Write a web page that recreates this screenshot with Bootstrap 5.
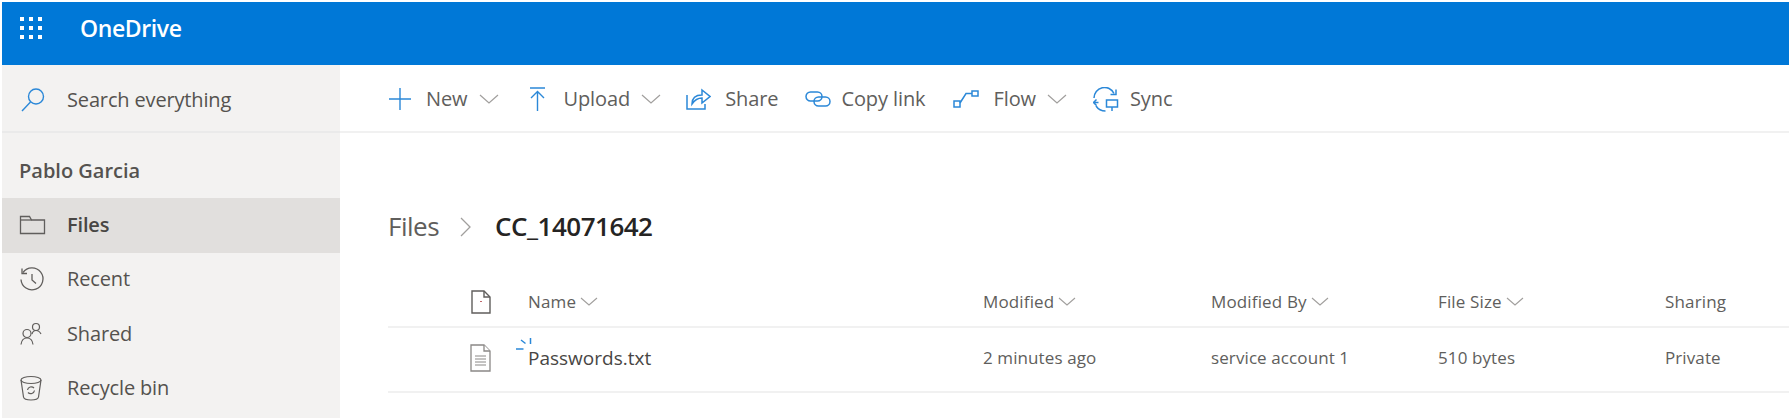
<!DOCTYPE html>
<html lang="en">
<head>
  <meta charset="UTF-8" />
  <meta name="viewport" content="width=device-width, initial-scale=1.0" />
  <title>OneDrive</title>
  <link href="https://cdn.jsdelivr.net/npm/bootstrap@5.3.2/dist/css/bootstrap.min.css" rel="stylesheet" />
  <style>
    html, body { height: 100%; }
    body {
      background: #fff;
      padding: 2px 0 0 2px;
      overflow: hidden;
      font-family: "Open Sans", "Liberation Sans", sans-serif;
      color: #323130;
      font-size: 20px;
    }
    svg { display: block; flex: none; }
    .top-strip { height: 63px; background: #0078d7; color: #fff; }
    .waffle { margin-left: 17px; margin-bottom: 11px; }
    .brand-name { margin-left: 35px; margin-bottom: 11px; font-size: 23px; font-weight: 600; letter-spacing: -0.4px; }
    .app-body { height: 353px; }
    .side-panel { width: 338px; background: #f3f2f1; flex: none; }
    .search-row { height: 68px; padding: 3px 0 0 17px; border-bottom: 2px solid #eaeaea; }
    .side-label { letter-spacing: -0.15px; color: #55524f; margin-left: 20px; }
    .user-name { height: 65px; padding: 23px 0 0 17px; font-size: 20px; font-weight: 600; color: #55524f; }
    .side-item { height: 54.5px; padding: 0 0 1px 17px; }
    .side-item.current { background: #e1dfdd; }
    .side-item.current .side-label { font-weight: 600; color: #484644; }
    .tool-bar { height: 68px; padding: 2px 0 0 48px; border-bottom: 2px solid #f1f1f1; }
    .tool-item { color: #605e5c; letter-spacing: -0.1px; }
    .tool-gap-a { margin-left: 30px; }
    .tool-gap-b { margin-left: 25px; }
    .tool-gap-c { margin-left: 27px; }
    .tool-gap-d { margin-left: 28px; }
    .tool-gap-e { margin-left: 25px; }
    .tool-text { margin-left: 14px; }
    .tool-text-wide { margin-left: 17px; }
    .tool-text-near { margin-left: 10px; }
    .tool-caret { margin-left: 11px; }
    .crumb-row { height: 132px; padding: 74px 0 0 48px; font-size: 26px; letter-spacing: -0.5px; }
    .crumb-root { color: #605e5c; }
    .crumb-sep { margin: 10px 23px 0 21px; }
    .crumb-now { font-weight: 600; color: #252423; }
    .list-area { margin-left: 48px; }
    .file-row { display: grid; grid-template-columns: 140px 455px 228px 227px 227px 1fr; align-items: center; border-bottom: 2px solid #f1f1f1; font-size: 17px; color: #605e5c; letter-spacing: 0.1px; }
    .head-row { height: 63px; padding-top: 12px; letter-spacing: 0.15px; }
    .data-row { height: 65px; padding-bottom: 3px; }
    .name-cell { font-size: 19px; letter-spacing: 0; color: #484644; position: relative; }
    .file-icon { margin-left: 82px; }
    .head-icon { margin-left: 83px; }
    .spin-mark { position: absolute; left: -12px; top: -7px; }
  </style>
</head>
<body>
  <div class="top-strip d-flex align-items-center">
    <svg class="waffle" width="26" height="24" viewBox="0 0 26 24" fill="#fff">
      <rect x="1" y="1" width="4" height="4"/><rect x="10" y="1" width="4" height="4"/><rect x="19" y="1" width="4" height="4"/>
      <rect x="1" y="10" width="4" height="4"/><rect x="10" y="10" width="4" height="4"/><rect x="19" y="10" width="4" height="4"/>
      <rect x="1" y="19" width="4" height="4"/><rect x="10" y="19" width="4" height="4"/><rect x="19" y="19" width="4" height="4"/>
    </svg>
    <div class="brand-name">OneDrive</div>
  </div>

  <div class="app-body d-flex">
    <!-- Left nav -->
    <div class="side-panel">
      <div class="search-row d-flex align-items-center">
        <svg width="28" height="28" viewBox="0 0 28 28" fill="none" stroke="#2b88d8" stroke-width="1.4"><circle cx="17" cy="10.5" r="7.5"/><path d="M11.5 16 3 25"/></svg>
        <span class="side-label">Search everything</span>
      </div>
      <div class="user-name">Pablo Garcia</div>
      <div class="side-item current d-flex align-items-center">
        <svg width="28" height="20" viewBox="0 0 28 20" fill="none" stroke="#605e5c" stroke-width="1.3"><path d="M1.500 18.500V1.500h9l2 3.500h13v13.500z"/><path d="M1.500 5h11"/></svg>
        <span class="side-label">Files</span>
      </div>
      <div class="side-item d-flex align-items-center">
        <svg width="28" height="25" viewBox="0 0 28 25" fill="none" stroke="#605e5c" stroke-width="1.3"><path d="M4 5.500A11 11 0 1 1 2 12.500"/><path d="M3 1.500v5h5"/><path d="M13 7v6l4 3.500"/></svg>
        <span class="side-label">Recent</span>
      </div>
      <div class="side-item d-flex align-items-center">
        <svg width="28" height="24" viewBox="0 0 28 24" fill="none" stroke="#605e5c" stroke-width="1.2"><circle cx="17" cy="5" r="3.500"/><path d="M13 12c.5-2 2-3.500 4-3.500s4 1.500 5 3.500"/><circle cx="8" cy="11.500" r="4"/><path d="M2 22.500c.5-4 2.500-6.500 6-6.500s5.500 2.500 6 6.500"/></svg>
        <span class="side-label">Shared</span>
      </div>
      <div class="side-item d-flex align-items-center">
        <svg width="28" height="26" viewBox="0 0 28 26" fill="none" stroke="#605e5c" stroke-width="1.2"><ellipse cx="12" cy="5" rx="10" ry="3.500"/><path d="M2 5l2.500 17c.3 2 3 3 7.500 3s7.200-1 7.500-3L22 5"/><path d="M8.500 15a3.800 3.800 0 0 1 6.500-2M15.500 15.500a3.800 3.800 0 0 1-6.500 2"/></svg>
        <span class="side-label">Recycle bin</span>
      </div>
    </div>

    <!-- Main -->
    <div class="flex-grow-1">
      <div class="tool-bar d-flex align-items-center">
        <div class="tool-item d-flex align-items-center">
          <svg width="24" height="24" viewBox="0 0 24 24" fill="none" stroke="#2b88d8" stroke-width="1.400"><path d="M12 1v22M1 12h22"/></svg>
          <span class="tool-text">New</span>
          <svg class="tool-caret" width="20" height="10" viewBox="0 0 20 10" fill="none" stroke="#a19f9d" stroke-width="1.200"><path d="M1 1l9 8 9-8"/></svg>
        </div>
        <div class="tool-item tool-gap-a d-flex align-items-center">
          <svg width="18" height="26" viewBox="0 0 18 26" fill="none" stroke="#2b88d8" stroke-width="1.400"><path d="M1 2h15M8.500 25V6M2 12l6.500-6.500L15 12"/></svg>
          <span class="tool-text-wide">Upload</span>
          <svg class="tool-caret" width="20" height="10" viewBox="0 0 20 10" fill="none" stroke="#a19f9d" stroke-width="1.200"><path d="M1 1l9 8 9-8"/></svg>
        </div>
        <div class="tool-item tool-gap-b d-flex align-items-center">
          <svg width="25" height="22" viewBox="0 0 25 22" fill="none" stroke="#2b88d8" stroke-width="1.500"><path d="M1 7v14h18v-5"/><path d="M6 16c0-6 4-9 10-9V2l8 6.500-8 6.500v-5c-4 0-7 1.500-10 6z"/></svg>
          <span class="tool-text">Share</span>
        </div>
        <div class="tool-item tool-gap-c d-flex align-items-center">
          <svg width="26" height="16" viewBox="0 0 26 16" fill="none" stroke="#2b88d8" stroke-width="1.500"><rect x="1" y="1" width="16" height="9" rx="4.500"/><rect x="9" y="6" width="16" height="9" rx="4.500"/></svg>
          <span class="tool-text-near">Copy link</span>
        </div>
        <div class="tool-item tool-gap-d d-flex align-items-center">
          <svg width="26" height="18" viewBox="0 0 26 18" fill="none" stroke="#2b88d8" stroke-width="1.500"><rect x="1" y="11" width="6" height="6"/><rect x="19" y="1" width="6" height="5"/><path d="M7 13 13 3.500h6"/></svg>
          <span class="tool-text">Flow</span>
          <svg class="tool-caret" width="20" height="10" viewBox="0 0 20 10" fill="none" stroke="#a19f9d" stroke-width="1.200"><path d="M1 1l9 8 9-8"/></svg>
        </div>
        <div class="tool-item tool-gap-e d-flex align-items-center">
          <svg width="28" height="25" viewBox="0 0 28 25" fill="none" stroke="#2b88d8" stroke-width="1.500"><path d="M2 11A10.500 10.500 0 0 1 22 6.500"/><path d="M24 2.500v5h-5.500"/><path d="M1 15.500h5.500M1.500 15.500l3-3M1.500 15.500l3 3M4 19c2 3 5 5 9.500 5"/><rect x="14.500" y="13" width="11" height="7"/><path d="M20 20v4"/></svg>
          <span class="tool-text-near">Sync</span>
        </div>
      </div>

      <div class="crumb-row d-flex align-items-start">
        <span class="crumb-root">Files</span>
        <svg class="crumb-sep" width="12" height="20" viewBox="0 0 12 20" fill="none" stroke="#a19f9d" stroke-width="1.300"><path d="M1 1l9 9-9 9"/></svg>
        <span class="crumb-now">CC_14071642</span>
      </div>

      <div class="list-area">
        <div class="file-row head-row">
          <svg class="head-icon" width="20" height="24" viewBox="0 0 20 24" fill="none" stroke="#605e5c" stroke-width="1.400"><path d="M1 1h12l6 6v16H1z"/><path d="M13 1v6h6"/><path d="M10 11v1" stroke="#a4262c"/></svg>
          <div class="d-flex align-items-center"><span>Name</span><svg class="ms-1" width="18" height="9" viewBox="0 0 18 9" fill="none" stroke="#a19f9d" stroke-width="1.100"><path d="M1 1l8 7 8-7"/></svg></div>
          <div class="d-flex align-items-center"><span>Modified</span><svg class="ms-1" width="18" height="9" viewBox="0 0 18 9" fill="none" stroke="#a19f9d" stroke-width="1.100"><path d="M1 1l8 7 8-7"/></svg></div>
          <div class="d-flex align-items-center"><span>Modified By</span><svg class="ms-1" width="18" height="9" viewBox="0 0 18 9" fill="none" stroke="#a19f9d" stroke-width="1.100"><path d="M1 1l8 7 8-7"/></svg></div>
          <div class="d-flex align-items-center"><span>File Size</span><svg class="ms-1" width="18" height="9" viewBox="0 0 18 9" fill="none" stroke="#a19f9d" stroke-width="1.100"><path d="M1 1l8 7 8-7"/></svg></div>
          <div>Sharing</div>
        </div>
        <div class="file-row data-row">
          <svg class="file-icon" width="21" height="28" viewBox="0 0 21 28" fill="#fff" stroke="#8a8886" stroke-width="1.300"><path d="M1 1h13l6 6v20H1z"/><path d="M14 1v6h6"/><path d="M5 12h11M5 15h11M5 18h11M5 21h11" stroke-width="1"/></svg>
          <div class="name-cell">
            <svg class="spin-mark" width="16" height="16" viewBox="0 0 16 16" fill="none" stroke="#2b88d8" stroke-width="1.500"><path d="M14.500 1v6M5 3l4.500 3.500M0 12h7.500"/></svg>
            Passwords.txt
          </div>
          <div>2 minutes ago</div>
          <div>service account 1</div>
          <div>510 bytes</div>
          <div>Private</div>
        </div>
      </div>
    </div>
  </div>

  <script src="https://cdn.jsdelivr.net/npm/bootstrap@5.3.2/dist/js/bootstrap.bundle.min.js"></script>
</body>
</html>
